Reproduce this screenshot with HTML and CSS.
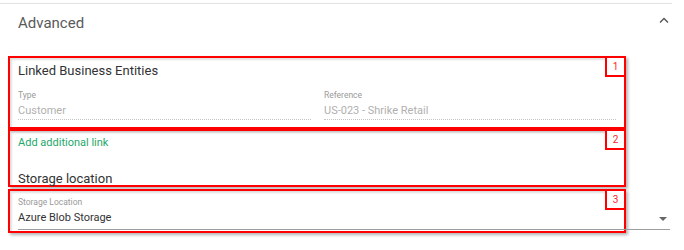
FILE: index.html
```html
<!DOCTYPE html>
<html lang="en">

<head>
  <meta charset="UTF-8" />
  <title>Advanced</title>
  <link rel="stylesheet" href="styles.css">
</head>

<body>

  <div class="panel">
    <div class="panel-header">
      <span class="panel-title">Advanced</span>
      <svg class="caret" width="10" height="6" viewBox="0 0 10 6">
        <polyline points="1,5.5 5,1.5 9,5.5" fill="none" stroke="#555" stroke-width="1.4" />
      </svg>
    </div>

    <div class="panel-body">
      <!-- 1: linked entities -->
      <div class="callout callout-entities">
        <span class="badge">1</span>
        <h4 class="section-title">Linked Business Entities</h4>
        <div class="field-row">
          <div class="field field-readonly">
            <div class="field-label">Type</div>
            <div class="field-value">Customer</div>
          </div>
          <div class="field field-readonly">
            <div class="field-label">Reference</div>
            <div class="field-value">US-023 - Shrike Retail</div>
          </div>
        </div>
      </div>

      <!-- 2: add link + storage heading -->
      <div class="callout callout-links">
        <span class="badge">2</span>
        <a class="add-link" href="#">Add additional link</a>
        <h4 class="section-title storage-title">Storage location</h4>
      </div>

      <!-- 3: storage select -->
      <div class="callout callout-storage">
        <span class="badge">3</span>
        <div class="field field-select">
          <div class="field-label">Storage Location</div>
          <div class="field-value">Azure Blob Storage</div>
          <span class="select-arrow"></span>
        </div>
      </div>
    </div>
  </div>

</body>

</html>
```

FILE: styles.css
```css
body {
  margin: 0;
  background: #fff;
  font-family: Roboto, "Liberation Sans", sans-serif;
}

.panel {
  width: 672px;
  height: 250px;
  border-top: 1px solid #e2e2e2;
  margin-top: 3px;
  box-sizing: border-box;
}

.panel-header {
  display: flex;
  align-items: center;
  justify-content: space-between;
  height: 38px;
  padding: 0 3px 0 18px;
}

.panel-title {
  font-size: 15px;
  color: #5a5a5a;
  margin-top: -1px;
}

.caret {
  margin-top: -6px;
}

.panel-body {
  padding-top: 14px;
}

.callout {
  position: relative;
  width: 618px;
  margin-left: 8px;
  box-sizing: border-box;
  border: 2px solid #f00;
  padding: 0 8px;
  box-shadow: inset 2px 2px 2px rgba(0, 0, 0, 0.12), 2px 2px 3px rgba(0, 0, 0, 0.3);
}

.badge {
  position: absolute;
  top: -2px;
  right: -2px;
  width: 21px;
  height: 21px;
  box-sizing: border-box;
  border: 2px solid #f00;
  background: #fff;
  color: #f22;
  font-size: 10px;
  line-height: 17px;
  text-align: center;
}

.section-title {
  margin: 0;
  font-size: 13px;
  font-weight: 400;
  line-height: 16px;
  color: #333;
}

.callout-entities {
  height: 73px;
  padding-top: 5px;
}

.field-row {
  display: grid;
  grid-template-columns: 293px 292px;
  gap: 13px;
  margin-top: 11px;
}

.field-label {
  font-size: 8.5px;
  line-height: 11px;
  color: #9a9a9a;
}

.field-value {
  font-size: 11px;
  line-height: 14px;
  color: #333;
  margin-top: 3px;
  padding-bottom: 1px;
}

.field-readonly .field-value {
  color: #b0b0b0;
  border-bottom: 1px dotted #c4c4c4;
}

.callout-links {
  height: 58px;
  padding-top: 5px;
}

.add-link {
  display: block;
  font-size: 11px;
  line-height: 14px;
  color: #1ea86a;
  text-decoration: none;
}

.storage-title {
  margin-top: 21px;
  line-height: 15px;
}

.callout-storage {
  height: 44px;
  margin-top: 2px;
  padding-top: 6px;
}

.field-select {
  position: relative;
  width: 652px;
}

.field-select .field-value {
  padding-bottom: 4px;
  border-bottom: 1px solid #9e9e9e;
}

.select-arrow {
  position: absolute;
  right: 3px;
  top: 20px;
  border-left: 4px solid transparent;
  border-right: 4px solid transparent;
  border-top: 4px solid #666;
}
```
